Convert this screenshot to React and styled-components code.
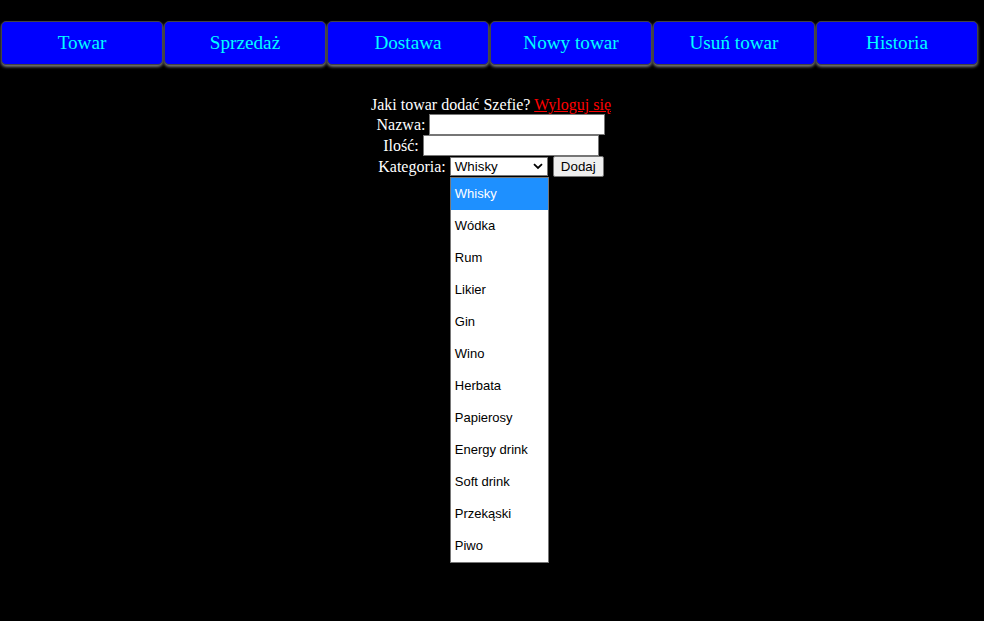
import React, { useState } from 'react';
import styled, { createGlobalStyle } from 'styled-components';

const GlobalStyle = createGlobalStyle`
  html, body {
    margin: 0;
    background: #000;
    color: #fff;
    font-family: "Liberation Serif", "Times New Roman", serif;
    font-size: 16px;
  }
`;

const Page = styled.div`
  min-height: 621px;
  background: #000;
`;

const Nav = styled.nav`
  display: flex;
  padding-top: 20px;
`;

const NavButton = styled.button`
  flex: 0 0 162px;
  margin: 1px 0 1px 1px;
  height: 44px;
  background: #0000ff;
  color: #00ffff;
  border: 1px solid #444;
  border-radius: 5px;
  box-shadow: 0 2px 3px #777;
  font-family: "Liberation Serif", "Times New Roman", serif;
  font-size: 19.2px;
  cursor: pointer;
  padding: 0;
`;

const Form = styled.form`
  display: flex;
  flex-direction: column;
  align-items: center;
  margin-top: 29px;
  padding-right: 2px;
`;

const Greeting = styled.div`
  height: 19px;
  line-height: 19px;
`;

const Logout = styled.a`
  color: #ff0000;
  text-decoration: underline;
`;

const Row = styled.div`
  position: relative;
  display: flex;
  align-items: center;
  justify-content: center;
  gap: 4px;
  height: 21px;
`;

const TextInput = styled.input`
  box-sizing: border-box;
  width: 176px;
  height: 21px;
  border: 1px solid #767676;
  border-radius: 0;
  padding: 1px 2px;
  font-family: "Liberation Sans", Arial, sans-serif;
  font-size: 13.33px;
  background: #fff;
`;

const SelectBox = styled.div`
  position: relative;
  box-sizing: border-box;
  width: 98px;
  height: 19px;
  border: 1px solid #767676;
  background: #fff;
  color: #000;
  font-family: "Liberation Sans", Arial, sans-serif;
  font-size: 13.33px;
  display: flex;
  align-items: center;
  justify-content: space-between;
  padding: 0 4px 0 4px;
  cursor: default;
`;

const Dropdown = styled.ul`
  position: absolute;
  top: 19px;
  left: -1px;
  margin: 0;
  padding: 0;
  list-style: none;
  width: 99px;
  box-sizing: border-box;
  border: 1px solid #767676;
  background: #fff;
  z-index: 5;
`;

const Option = styled.li`
  height: 32px;
  line-height: 32px;
  padding-left: 4px;
  font-family: "Liberation Sans", Arial, sans-serif;
  font-size: 13px;
  color: ${p => (p.selected ? '#fff' : '#000')};
  background: ${p => (p.selected ? '#1e90ff' : '#fff')};
`;

const SubmitButton = styled.button`
  box-sizing: border-box;
  height: 21px;
  width: 51px;
  margin-left: 1px;
  padding: 1px 6px;
  font-family: "Liberation Sans", Arial, sans-serif;
  font-size: 13.33px;
  color: #000;
  background: #efefef;
  border: 1px solid #767676;
  border-radius: 2px;
`;

const tabs = ['Towar', 'Sprzedaż', 'Dostawa', 'Nowy towar', 'Usuń towar', 'Historia'];

const categories = [
  'Whisky', 'Wódka', 'Rum', 'Likier', 'Gin', 'Wino', 'Herbata',
  'Papierosy', 'Energy drink', 'Soft drink', 'Przekąski', 'Piwo',
];

function Chevron() {
  return (
    <svg width="10" height="7" viewBox="0 0 10 7">
      <path d="M1 1.2 L5 5 L9 1.2" fill="none" stroke="#000" strokeWidth="1.8" />
    </svg>
  );
}

export default function App() {
  const [category] = useState('Whisky');

  return (
    <Page>
      <GlobalStyle />
      <Nav>
        {tabs.map(t => (
          <NavButton key={t} type="button">{t}</NavButton>
        ))}
      </Nav>

      <Form onSubmit={e => e.preventDefault()}>
        <Greeting>
          Jaki towar dodać Szefie? <Logout href="#">Wyloguj się</Logout>
        </Greeting>
        <Row>
          Nazwa: <TextInput type="text" />
        </Row>
        <Row>
          Ilość: <TextInput type="text" />
        </Row>
        <Row>
          Kategoria:
          <SelectBox>
            <span>{category}</span>
            <Chevron />
            <Dropdown>
              {categories.map(c => (
                <Option key={c} selected={c === category}>{c}</Option>
              ))}
            </Dropdown>
          </SelectBox>
          <SubmitButton type="submit">Dodaj</SubmitButton>
        </Row>
      </Form>
    </Page>
  );
}
